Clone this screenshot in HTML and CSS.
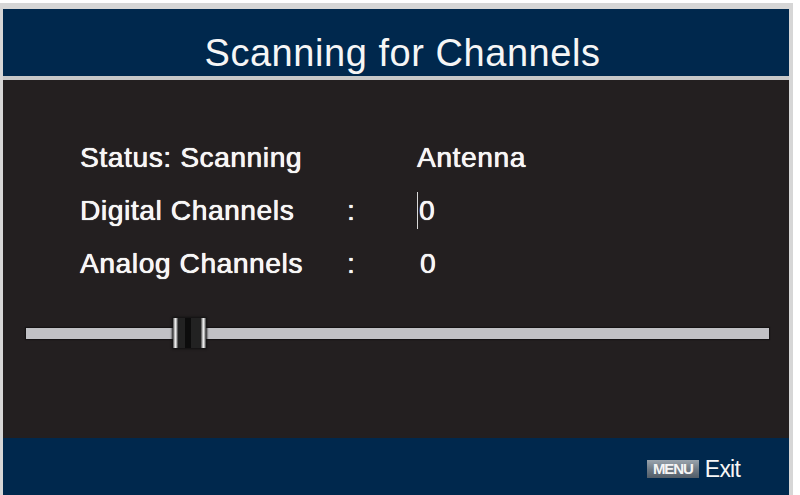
FILE: index.html
```html
<!DOCTYPE html>
<html>
<head>
<meta charset="utf-8">
<link rel="stylesheet" href="styles.css">
</head>
<body>
<div class="frame">
  <header class="header"><h1 class="title">Scanning for Channels</h1></header>
  <main class="panel">
    <div class="rows">
      <div class="label">Status: Scanning</div><div class="colon"></div><div class="value">Antenna</div>
      <div class="label">Digital Channels</div><div class="colon">:</div><div class="value"><span class="cursor"></span>0</div>
      <div class="label">Analog Channels</div><div class="colon">:</div><div class="value value-shift">0</div>
    </div>
    <div class="slider">
      <div class="track"></div>
      <div class="thumb"><span class="bar"></span><span class="core"></span><span class="bar"></span></div>
    </div>
  </main>
  <footer class="footer">
    <span class="badge">MENU</span><span class="exit">Exit</span>
  </footer>
</div>
</body>
</html>
```
FILE: styles.css
```css
html, body { margin: 0; padding: 0; background: #ffffff; }
body { font-family: "Liberation Sans", Arial, sans-serif; color: #f6f6f6; }
.frame {
  margin-top: 3px;
  width: 786px;
  height: 486px;
  border-top: 6px solid #d6d6d6;
  border-left: 3px solid #d6d6d6;
  border-right: 4px solid #d6d6d6;
  display: flex;
  flex-direction: column;
}
.header {
  height: 67px;
  background: #00284d;
  border-bottom: 4px solid #c8c8c8;
  box-sizing: content-box;
}
.title {
  margin: 0;
  padding: 24px 0 0 13px;
  font-weight: normal;
  font-size: 38px;
  line-height: 38px;
  text-align: center;
  letter-spacing: 0.55px;
  transform: scaleY(1.04);
}
.panel {
  height: 358px;
  background: #231f20;
  padding-top: 51px;
  box-sizing: border-box;
}
.rows {
  display: grid;
  grid-template-columns: 267px 70px 1fr;
  padding-left: 77px;
  font-size: 28px;
  line-height: 53px;
  letter-spacing: 0.65px;
  text-shadow: 0 0 1px #ffffff, 0.3px 0 0 #ffffff;
}
.value { position: relative; }
.value-shift { padding-left: 3px; }
.cursor {
  display: inline-block;
  width: 1px;
  height: 37px;
  background: #d8d8d8;
  vertical-align: -9px;
  margin-right: 1px;
}
.slider {
  position: relative;
  margin: 28px 0 0 23px;
  width: 743px;
  height: 30px;
  display: flex;
  align-items: center;
}
.track {
  width: 100%;
  height: 11px;
  background: #c1c1c5;
  box-shadow: 0 0 1px 1px #151314;
}
.thumb {
  position: absolute;
  left: 147px;
  top: 0;
  width: 33px;
  height: 30px;
  background: #222;
  box-shadow: 0 0 2px 1px #111;
  display: flex;
  justify-content: space-between;
  align-items: stretch;
}
.bar {
  width: 5px;
  background: linear-gradient(90deg, #444 0%, #f2f2f2 45%, #ddd 60%, #333 100%);
}
.core {
  width: 6px;
  margin-left: -4px;
  background: #0c0c0c;
}
.footer {
  flex: 1;
  background: #00284d;
  display: flex;
  justify-content: flex-end;
  align-items: center;
  padding: 4px 49px 0 0;
}
.badge {
  width: 52px;
  height: 18px;
  box-sizing: border-box;
  background: linear-gradient(180deg, #9aa4ad 0%, #707b86 50%, #525d68 100%);
  color: #f4f4f4;
  font-size: 15px;
  font-weight: bold;
  line-height: 18px;
  text-align: center;
  letter-spacing: -1.1px;
  margin-right: 6px;
}
.exit {
  font-size: 23px;
  line-height: 22px;
  letter-spacing: -0.8px;
}
```
